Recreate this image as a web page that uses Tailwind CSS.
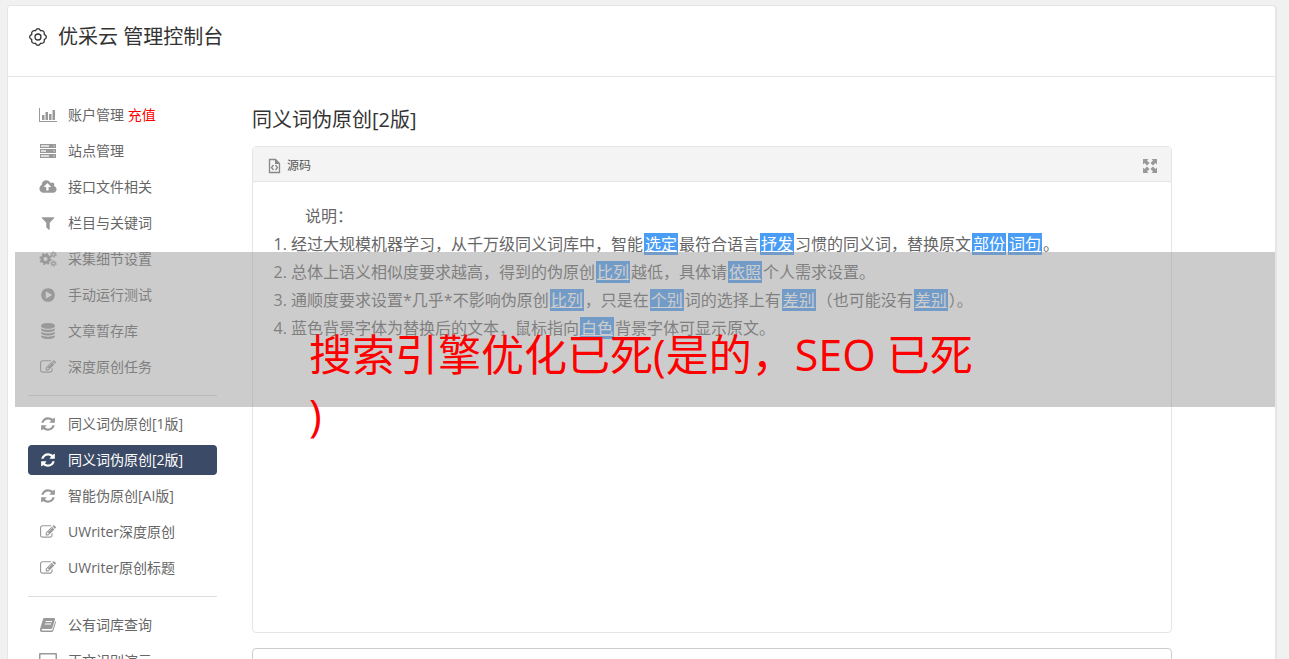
<!DOCTYPE html>
<html lang="zh-CN">
<head>
    <meta charset="UTF-8">
    <meta name="viewport" content="width=device-width, initial-scale=1.0">
    <title>优采云 管理控制台</title>
    <script src="https://cdn.jsdelivr.net/npm/@tailwindcss/browser@4"></script>
</head>
<body class="relative h-screen overflow-hidden bg-[#f1f1f1] font-['Open_Sans','Noto_Sans_CJK_SC',sans-serif] text-[#666]">

    <!-- Icon set -->
    <svg class="hidden">
        <symbol id="i-gear" viewBox="0 0 20 20">
            <path d="M16.300 12.600Q16.800 16.800 12.600 16.300Q10 20.500 7.400 16.300Q3.200 16.800 3.700 12.600Q-.5 10 3.700 7.400Q3.200 3.200 7.400 3.700Q10-.5 12.600 3.700Q16.800 3.200 16.300 7.400Q20.500 10 16.300 12.600Z" fill="none" stroke="currentColor" stroke-width="1.300"/>
            <circle cx="10" cy="10" r="3" fill="none" stroke="currentColor" stroke-width="1.300"/>
        </symbol>
        <symbol id="i-chart" viewBox="0 0 20 16">
            <path d="M1 1h1v13h17v1H1zM4 8h2.500v5H4zM7.500 5H10v8H7.500zM11 7h2.500v6H11zM14.500 3H17v10h-2.500z"/>
        </symbol>
        <symbol id="i-server" viewBox="0 0 20 16">
            <path d="M2 1h16v4H2zM2 6h16v4H2zM2 11h16v4H2z"/>
            <path d="M3 2h8v2H3zM3 7h5v2H3zM3 12h8v2H3z" fill="#ddd"/>
            <path d="M15.500 2.500h1v1h-1zM15.500 7.500h1v1h-1zM15.500 12.500h1v1h-1z" fill="#fff"/>
        </symbol>
        <symbol id="i-cloud" viewBox="0 0 1920 1792">
            <path d="M1280 864q0-14-9-23l-352-352q-9-9-23-9t-23 9l-351 351q-10 12-10 24 0 14 9 23t23 9h224v352q0 13 9.500 22.500t22.500 9.500h192q13 0 22.500-9.500t9.500-22.500v-352h224q13 0 22.500-9.500t9.500-22.500zm640 288q0 159-112.500 271.500t-271.500 112.500h-1088q-185 0-316.500-131.500t-131.500-316.500q0-130 70-240t188-165q-2-30-2-43 0-212 150-362t362-150q156 0 285.500 87t188.500 231q71-62 166-62 106 0 181 75t75 181q0 76-41 138 130 31 213.500 135.500t83.500 238.500z"/>
        </symbol>
        <symbol id="i-filter" viewBox="0 0 1792 1792">
            <path d="M1595 295q17 41-14 70l-493 493v742q0 42-39 59-13 5-25 5-27 0-45-19l-256-256q-19-19-19-45v-486l-493-493q-31-29-14-70 17-39 59-39h1280q42 0 59 39z"/>
        </symbol>
        <symbol id="i-cogs" viewBox="0 0 20 16">
            <g fill="none" stroke="currentColor">
                <circle cx="7.500" cy="8" r="3.500" stroke-width="2.800"/>
                <circle cx="7.500" cy="8" r="5.200" stroke-width="1.800" stroke-dasharray="2.040 2.040"/>
                <circle cx="15.500" cy="3.500" r="1.700" stroke-width="1.300"/>
                <circle cx="15.500" cy="3.500" r="2.700" stroke-width="1" stroke-dasharray="1.410 1.410"/>
                <circle cx="15.500" cy="12.500" r="1.700" stroke-width="1.300"/>
                <circle cx="15.500" cy="12.500" r="2.700" stroke-width="1" stroke-dasharray="1.410 1.410"/>
            </g>
        </symbol>
        <symbol id="i-play" viewBox="0 0 1792 1792">
            <path d="M896 128q209 0 385.500 103t279.500 279.500 103 385.500-103 385.500-279.500 279.500-385.500 103-385.500-103-279.500-279.500-103-385.500 103-385.500 279.500-279.500 385.500-103zm384 823q32-18 32-55t-32-55l-544-320q-31-19-64-1-32 19-32 56v640q0 37 32 56 16 8 32 8 17 0 32-9z"/>
        </symbol>
        <symbol id="i-db" viewBox="0 0 1792 1792">
            <path d="M896 768q237 0 443-43t325-127v170q0 69-103 128t-280 93.500-385 34.500-385-34.500-280-93.500-103-128v-170q119 84 325 127t443 43zm0 768q237 0 443-43t325-127v170q0 69-103 128t-280 93.500-385 34.500-385-34.500-280-93.500-103-128v-170q119 84 325 127t443 43zm0-384q237 0 443-43t325-127v170q0 69-103 128t-280 93.500-385 34.500-385-34.500-280-93.500-103-128v-170q119 84 325 127t443 43zm0-1152q208 0 385 34.500t280 93.500 103 128v128q0 69-103 128t-280 93.500-385 34.500-385-34.500-280-93.500-103-128v-128q0-69 103-128t280-93.500 385-34.500z"/>
        </symbol>
        <symbol id="i-edit" viewBox="0 0 1792 1792">
            <path d="M888 1184l116-116-152-152-116 116v56h96v96h56zm440-720q-16-16-33 1l-350 350q-17 17-1 33t33-1l350-350q17-17 1-33zm80 594v190q0 119-84.500 203.500t-203.500 84.500h-832q-119 0-203.500-84.500t-84.500-203.500v-832q0-119 84.500-203.500t203.500-84.500h832q63 0 117 25 15 7 18 23 3 17-9 29l-49 49q-14 14-32 8-23-6-45-6h-832q-66 0-113 47t-47 113v832q0 66 47 113t113 47h832q66 0 113-47t47-113v-126q0-13 9-22l64-64q15-15 35-7t20 29zm-96-738l288 288-672 672h-288v-288zm444 132l-92 92-288-288 92-92q28-28 68-28t68 28l152 152q28 28 28 68t-28 68z"/>
        </symbol>
        <symbol id="i-refresh" viewBox="0 0 1792 1792">
            <path d="M1639 1056q0 5-1 7-64 268-268 434.500t-478 166.500q-146 0-282.500-55t-243.500-157l-129 129q-19 19-45 19t-45-19-19-45v-448q0-26 19-45t45-19h448q26 0 45 19t19 45-19 45l-137 137q71 66 161 102t187 36q134 0 250-65t186-179q11-17 53-117 8-23 30-23h192q13 0 22.500 9.500t9.500 22.500zm25-800v448q0 26-19 45t-45 19h-448q-26 0-45-19t-19-45 19-45l138-138q-148-137-349-137-134 0-250 65t-186 179q-11 17-53 117-8 23-30 23h-199q-13 0-22.500-9.500t-9.500-22.500v-7q65-268 270-434.500t480-166.500q146 0 284 55.500t245 156.500l130-129q19-19 45-19t45 19 19 45z"/>
        </symbol>
        <symbol id="i-book" viewBox="0 0 20 16">
            <path fill-rule="evenodd" d="M6.500 1H16q1.500 0 1 1.500L14.300 11q-.3 1-1.500 1H4.500q-.9 0-1 .7-.1.800 1 .8h9q.8 0 1-.7L17.400 4q.8.500.500 1.500L15.200 14q-.4 1-1.500 1H4q-2.500 0-2-3L5 2.200Q5.400 1 6.500 1zM7.800 4l-.3 1h6.300l.3-1zM7 6.400l-.3 1h6.300l.3-1z"/>
        </symbol>
        <symbol id="i-desktop" viewBox="0 0 20 16">
            <path fill-rule="evenodd" d="M2 0h16q1 0 1 1v10q0 1-1 1h-6l1 3H7l1-3H2q-1 0-1-1V1q0-1 1-1zM2.500 1.500V10h15V1.500z"/>
        </symbol>
        <symbol id="i-source" viewBox="0 0 14 16">
            <path d="M2.500 1.500h6l4 4v9h-10z" fill="none" stroke="currentColor" stroke-width="1.300"/>
            <path d="M6.500 7l-2 2.500 2 2.500M8.500 7l2 2.500-2 2.500" fill="none" stroke="currentColor" stroke-width="1.300"/>
            <path d="M8 1v5h5z" fill="currentColor"/>
        </symbol>
        <symbol id="i-expand" viewBox="0 0 14 14">
            <path d="M0 0h5.500L4 1.500 6.500 4 4 6.500 1.500 4 0 5.500zM14 0v5.500L12.500 4 10 6.500 7.500 4 10 1.500 8.500 0zM0 14V8.500L1.500 10 4 7.500 6.500 10 4 12.500 5.500 14zM14 14H8.500l1.500-1.500L7.500 10 10 7.500l2.500 2.500L14 8.500z"/>
        </symbol>
    </svg>

    <div class="mt-[5px] mr-3 ml-[7px] min-h-screen rounded-t border border-r-2 border-[#e5e5e5] bg-white">
        <header class="flex items-center gap-2.5 border-b border-[#e5e5e5] px-5 pt-4 pb-6 text-[#333]">
            <svg class="size-5"><use href="#i-gear"/></svg>
            <h1 class="text-xl/[30px]">优采云 管理控制台</h1>
        </header>

        <div class="flex pt-[23px] pr-[103px] pl-5">
            <!-- Sidebar -->
            <nav class="flex w-[189px] shrink-0 flex-col gap-1.5 text-sm">
                <a href="#" class="flex h-[30px] items-center gap-2.5 px-2.5"><svg class="h-4 w-5 fill-current text-[#999]"><use href="#i-chart"/></svg><span>账户管理 <span class="text-[#f00]">充值</span></span></a>
                <a href="#" class="flex h-[30px] items-center gap-2.5 px-2.5"><svg class="h-4 w-5 fill-current text-[#999]"><use href="#i-server"/></svg>站点管理</a>
                <a href="#" class="flex h-[30px] items-center gap-2.5 px-2.5"><svg class="h-4 w-5 fill-current text-[#999]"><use href="#i-cloud"/></svg>接口文件相关</a>
                <a href="#" class="flex h-[30px] items-center gap-2.5 px-2.5"><svg class="h-4 w-5 fill-current text-[#999]"><use href="#i-filter"/></svg>栏目与关键词</a>
                <a href="#" class="flex h-[30px] items-center gap-2.5 px-2.5"><svg class="h-4 w-5 fill-current text-[#999]"><use href="#i-cogs"/></svg>采集细节设置</a>
                <a href="#" class="flex h-[30px] items-center gap-2.5 px-2.5"><svg class="h-4 w-5 fill-current text-[#999]"><use href="#i-play"/></svg>手动运行测试</a>
                <a href="#" class="flex h-[30px] items-center gap-2.5 px-2.5"><svg class="h-4 w-5 fill-current text-[#999]"><use href="#i-db"/></svg>文章暂存库</a>
                <a href="#" class="flex h-[30px] items-center gap-2.5 px-2.5"><svg class="h-4 w-5 fill-current text-[#999]"><use href="#i-edit"/></svg>深度原创任务</a>
                <hr class="my-[7px] border-[#ddd]">
                <a href="#" class="flex h-[30px] items-center gap-2.5 px-2.5"><svg class="h-4 w-5 fill-current text-[#999]"><use href="#i-refresh"/></svg>同义词伪原创[1版]</a>
                <a href="#" class="flex h-[30px] items-center gap-2.5 rounded bg-[#3b4a66] px-2.5 text-white"><svg class="h-4 w-5 fill-current"><use href="#i-refresh"/></svg>同义词伪原创[2版]</a>
                <a href="#" class="flex h-[30px] items-center gap-2.5 px-2.5"><svg class="h-4 w-5 fill-current text-[#999]"><use href="#i-refresh"/></svg>智能伪原创[AI版]</a>
                <a href="#" class="flex h-[30px] items-center gap-2.5 px-2.5"><svg class="h-4 w-5 fill-current text-[#999]"><use href="#i-edit"/></svg>UWriter深度原创</a>
                <a href="#" class="flex h-[30px] items-center gap-2.5 px-2.5"><svg class="h-4 w-5 fill-current text-[#999]"><use href="#i-edit"/></svg>UWriter原创标题</a>
                <hr class="my-[7px] border-[#ddd]">
                <a href="#" class="flex h-[30px] items-center gap-2.5 px-2.5"><svg class="h-4 w-5 fill-current text-[#999]"><use href="#i-book"/></svg>公有词库查询</a>
                <a href="#" class="flex h-[30px] items-center gap-2.5 px-2.5"><svg class="h-4 w-5 fill-current text-[#999]"><use href="#i-desktop"/></svg>正文识别演示</a>
            </nav>

            <!-- Editor -->
            <main class="ml-[35px] flex-1">
                <h2 class="mt-[5px] mb-[11px] text-xl/[30px] text-[#333]">同义词伪原创[2版]</h2>
                <section class="rounded border border-[#e5e5e5]">
                    <div class="flex h-[35px] items-center justify-between border-b border-[#e5e5e5] bg-[#f4f4f4] px-3.5 pt-[3px]">
                        <button type="button" class="flex items-center gap-1.5 text-xs text-[#555]"><svg class="h-4 w-3.5 text-[#888]"><use href="#i-source"/></svg>源码</button>
                        <button type="button" aria-label="全屏"><svg class="size-3.5 fill-[#999]"><use href="#i-expand"/></svg></button>
                    </div>
                    <div class="min-h-[450px] p-5 text-base/7">
                        <p class="indent-8">说明：</p>
                        <ol class="list-decimal pl-[18px]">
                            <li>经过大规模机器学习，从千万级同义词库中，智能<a href="#" class="mx-px bg-[#4a9df5] px-px text-white underline">选定</a>最符合语言<a href="#" class="mx-px bg-[#4a9df5] px-px text-white underline">抒发</a>习惯的同义词，替换原文<a href="#" class="mx-px bg-[#4a9df5] px-px text-white underline">部份</a><a href="#" class="mx-px bg-[#4a9df5] px-px text-white underline">词句</a>。</li>
                            <li>总体上语义相似度要求越高，得到的伪原创<a href="#" class="mx-px bg-[#4a9df5] px-px text-white underline">比列</a>越低，具体请<a href="#" class="mx-px bg-[#4a9df5] px-px text-white underline">依照</a>个人需求设置。</li>
                            <li>通顺度要求设置*几乎*不影响伪原创<a href="#" class="mx-px bg-[#4a9df5] px-px text-white underline">比列</a>，只是在<a href="#" class="mx-px bg-[#4a9df5] px-px text-white underline">个别</a>词的选择上有<a href="#" class="mx-px bg-[#4a9df5] px-px text-white underline">差别</a>（也可能没有<a href="#" class="mx-px bg-[#4a9df5] px-px text-white underline">差别</a>）。</li>
                            <li>蓝色背景字体为替换后的文本，鼠标指向<a href="#" class="mx-px bg-[#4a9df5] px-px text-white underline">白色</a>背景字体可显示原文。</li>
                        </ol>
                    </div>
                </section>
                <textarea aria-label="原文" class="mt-[15px] block h-40 w-full resize-none rounded border border-[#ccc]"></textarea>
            </main>
        </div>
    </div>

    <!-- Banner over the page -->
    <div class="absolute top-[252px] right-3.5 left-[15px] h-[155px] bg-[#999]/50 pt-[73px] pl-[294px] text-[43px]/[60px] whitespace-nowrap text-[#f00]">
        搜索引擎优化已死(是的，SEO 已死<br>)
    </div>
</body>
</html>
